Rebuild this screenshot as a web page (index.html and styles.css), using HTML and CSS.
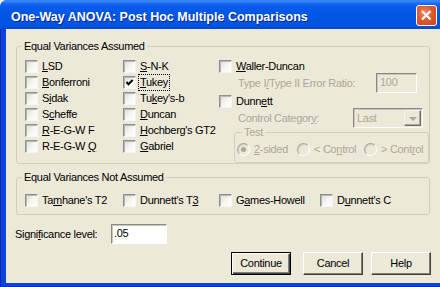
FILE: index.html
```html
<!DOCTYPE html>
<html>
<head>
<meta charset="utf-8">
<link rel="stylesheet" href="styles.css">
</head>
<body>
<div class="window">
  <div class="titlebar">
    <span class="title">One-Way ANOVA: Post Hoc Multiple Comparisons</span>
    <span class="close"><svg width="19" height="19" viewBox="0 0 19 19"><path d="M5 5L13.5 13.5M13.5 5L5 13.5" stroke="#fff" stroke-width="2.3" fill="none"/></svg></span>
  </div>
  <div class="frame">
    <div class="client">
      <fieldset class="group g1">
        <legend>Equal Variances Assumed</legend>
        <div class="g1-body">
          <div class="col">
            <div class="chk"><span class="box"></span><span class="lbl"><u>L</u>SD</span></div>
            <div class="chk"><span class="box"></span><span class="lbl"><u>B</u>onferroni</span></div>
            <div class="chk"><span class="box"></span><span class="lbl">S<u>i</u>dak</span></div>
            <div class="chk"><span class="box"></span><span class="lbl">S<u>c</u>heffe</span></div>
            <div class="chk"><span class="box"></span><span class="lbl"><u>R</u>-E-G-W F</span></div>
            <div class="chk"><span class="box"></span><span class="lbl">R-E-G-W <u>Q</u></span></div>
          </div>
          <div class="col">
            <div class="chk"><span class="box"></span><span class="lbl"><u>S</u>-N-K</span></div>
            <div class="chk"><span class="box"><svg width="11" height="11" viewBox="0 0 11 11"><path d="M2.5 5L4.5 7.2L8.7 3" stroke="#000" stroke-width="2" fill="none"/></svg></span><span class="lbl focus"><u>T</u>ukey</span></div>
            <div class="chk"><span class="box"></span><span class="lbl">Tu<u>k</u>ey's-b</span></div>
            <div class="chk"><span class="box"></span><span class="lbl"><u>D</u>uncan</span></div>
            <div class="chk"><span class="box"></span><span class="lbl"><u>H</u>ochberg's GT2</span></div>
            <div class="chk"><span class="box"></span><span class="lbl"><u>G</u>abriel</span></div>
          </div>
          <div class="col3">
            <div class="chk row13"><span class="box"></span><span class="lbl"><u>W</u>aller-Duncan</span></div>
            <div class="field ratio">
              <span class="dis">Type I<u>/</u>Type II Error Ratio:</span>
              <span class="tin dis-in">100</span>
            </div>
            <div class="chk row13 dunnett"><span class="box"></span><span class="lbl">Dunn<u>e</u>tt</span></div>
            <div class="field ctrl">
              <span class="dis">Control Categor<u>y</u>:</span>
              <span class="select"><span class="sel-text">Last</span><span class="sel-btn"><span class="arrow"></span></span></span>
            </div>
            <fieldset class="test">
              <legend>Test</legend>
              <div class="radios">
                <div class="radio r1"><span class="rb on"></span><span class="dis"><u>2</u>-sided</span></div>
                <div class="radio r2"><span class="rb"></span><span class="dis">&lt; Co<u>n</u>trol</span></div>
                <div class="radio r3"><span class="rb"></span><span class="dis">&gt; Cont<u>r</u>ol</span></div>
              </div>
            </fieldset>
          </div>
        </div>
      </fieldset>
      <fieldset class="group g2">
        <legend>Equal Variances Not Assumed</legend>
        <div class="g2-body">
          <div class="chk row13"><span class="box"></span><span class="lbl">Ta<u>m</u>hane's T2</span></div>
          <div class="chk row13"><span class="box"></span><span class="lbl">Dunnett's T<u>3</u></span></div>
          <div class="chk row13"><span class="box"></span><span class="lbl">G<u>a</u>mes-Howell</span></div>
          <div class="chk row13"><span class="box"></span><span class="lbl">D<u>u</u>nnett's C</span></div>
        </div>
      </fieldset>
      <div class="sig">
        <span class="sig-lbl">Signi<u>f</u>icance level:</span>
        <span class="tin sig-in">.05</span>
      </div>
      <div class="buttons">
        <span class="btn default">Continue</span>
        <span class="btn cancel">Cancel</span>
        <span class="btn help">Help</span>
      </div>
    </div>
  </div>
</div>
</body>
</html>
```
FILE: styles.css
```css
* { box-sizing: border-box; }
html, body { margin: 0; padding: 0; background: #fff; overflow: hidden; }
body {
  font-family: "Liberation Sans", Arial, sans-serif;
  font-size: 11px;
  letter-spacing: -0.3px;
  color: #000;
}
u { text-decoration: underline; text-underline-offset: 1px; }

.window {
  width: 446px;
  height: 287px;
  display: flex;
  flex-direction: column;
  border-radius: 7px 7px 0 0;
  overflow: hidden;
  background: #0842D6;
}

.titlebar {
  height: 29px;
  flex: none;
  display: flex;
  align-items: flex-start;
  background: linear-gradient(#2A7AF6 0, #3F8EFA 1px, #1C6EF5 3px, #0A5CEC 6px, #0056E5 50%, #0054E3 85%, #0049D0 100%);
}
.title {
  flex: 1;
  padding: 7px 0 0 11px;
  line-height: 20px;
  font-weight: bold;
  font-size: 12.5px;
  letter-spacing: 0;
  color: #fff;
  white-space: nowrap;
  text-shadow: 1px 1px 0 #0A2590;
}
.close {
  width: 21px;
  height: 21px;
  margin: 5px 9px 0 0;
  border: 1px solid #fff;
  border-radius: 3px;
  display: flex;
  background: radial-gradient(circle at 40% 35%, #EE8A68 0, #E0592F 45%, #C9431B 100%);
}

.frame {
  flex: 1;
  padding: 0 4px 4px 6px;
  background: #0845D8;
  box-shadow: inset 1px 0 0 #0028B0, inset 0 -1px 0 #0030B8;
}
.client {
  height: 254px;
  background: #ECE9D8;
  padding-top: 11px;
}

fieldset { margin: 0; min-width: 0; }
.group {
  margin-left: 10px;
  width: 414px;
  padding: 0;
  border: 1px solid #D0D0BF;
  border-radius: 3px;
}
legend {
  margin-left: 5px;
  padding: 0 2px;
  line-height: 12px;
}

.g1-body {
  display: grid;
  grid-template-columns: 98px 96px 1fr;
  padding: 8px 0 0 8px;
}
.col { display: flex; flex-direction: column; }

.chk { display: flex; align-items: flex-start; height: 16px; }
.row13 { height: 13px; }
.box {
  flex: none;
  width: 13px;
  height: 13px;
  margin-right: 4px;
  border: 1px solid;
  border-color: #8E8F8F #F4F4F0 #F4F4F0 #8E8F8F;
  box-shadow: inset 1px 1px 0 #B9B8B0;
  background: linear-gradient(135deg, #DCDBD3 0, #F6F6F3 55%, #FFFFFF 100%);
  display: flex;
}
.lbl { line-height: 13px; white-space: nowrap; }
.focus { outline: 1px dotted #000; outline-offset: 1px; }

.col3 { display: flex; flex-direction: column; }
.dis { color: #ACA899; line-height: 13px; white-space: nowrap; }
.field { display: flex; align-items: center; height: 20px; padding-left: 19px; }
.dunnett { margin-top: 2px; }

.tin {
  height: 20px;
  border: 1px solid;
  border-color: #8A8A85 #FFFFFF #FFFFFF #8A8A85;
  box-shadow: inset 1px 1px 0 #C9C7BA;
  line-height: 17px;
}
.dis-in {
  width: 41px;
  margin-left: auto;
  margin-right: 12px;
  padding-left: 3px;
  background: #ECE9D8;
  color: #ACA899;
}

.select {
  width: 70px;
  height: 20px;
  margin-left: auto;
  margin-right: 6px;
  display: flex;
  border: 1px solid;
  border-color: #8A8A85 #FFFFFF #FFFFFF #8A8A85;
  box-shadow: inset 1px 1px 0 #C9C7BA;
  padding: 1px;
}
.sel-text { flex: 1; color: #ACA899; line-height: 16px; padding-left: 2px; }
.sel-btn {
  width: 17px;
  height: 16px;
  border: 1px solid;
  border-color: #F4F3EE #716F64 #716F64 #F4F3EE;
  box-shadow: inset -1px -1px 0 #ACA899;
  display: flex;
  align-items: center;
  justify-content: center;
}
.arrow {
  width: 0;
  height: 0;
  border-left: 4px solid transparent;
  border-right: 4px solid transparent;
  border-top: 4px solid #ACA899;
  margin-top: 1px;
}

.test {
  margin-left: 15px;
  padding: 0 0 6px 2px;
  border: 1px solid #D0D0BF;
  border-radius: 3px;
}
.test legend { line-height: 8px; color: #ACA899; }
.radios { display: flex; height: 13px; margin-top: 7px; }
.radio { display: flex; align-items: flex-start; }
.r1 { width: 60px; }
.r2 { width: 67px; }
.rb {
  flex: none;
  width: 13px;
  height: 13px;
  margin-right: 4px;
  border-radius: 50%;
  border: 1px solid;
  border-color: #ACA899 #FFFFFF #FFFFFF #ACA899;
  box-shadow: inset 1px 1px 0 #D0CEC2;
  background: #ECE9D8;
  display: flex;
  align-items: center;
  justify-content: center;
}
.rb.on::after {
  content: "";
  width: 5px;
  height: 5px;
  border-radius: 50%;
  background: #ACA899;
}

.g2 { margin-top: 7px; }
.g2-body {
  display: grid;
  grid-template-columns: 98px 96px 101px 1fr;
  padding: 11px 0 7px 8px;
}

.sig {
  display: flex;
  align-items: center;
  height: 20px;
  margin-top: 9px;
  padding-left: 9px;
}
.sig-lbl { width: 96px; line-height: 13px; }
.sig-in {
  width: 56px;
  background: #fff;
  padding-left: 2px;
}

.buttons {
  display: flex;
  margin-top: 8px;
  padding-left: 225px;
}
.btn {
  width: 60px;
  height: 23px;
  display: flex;
  align-items: center;
  justify-content: center;
  background: #ECE9D8;
  border: 1px solid;
  border-color: #FFFFFF #404040 #404040 #FFFFFF;
  box-shadow: inset -1px -1px 0 #808080;
  line-height: 13px;
}
.btn.default {
  border-color: #000;
  box-shadow: inset 1px 1px 0 #fff, inset -1px -1px 0 #404040, inset -2px -2px 0 #808080;
}
.cancel { margin-left: 12px; }
.help { margin-left: 8px; }
```
